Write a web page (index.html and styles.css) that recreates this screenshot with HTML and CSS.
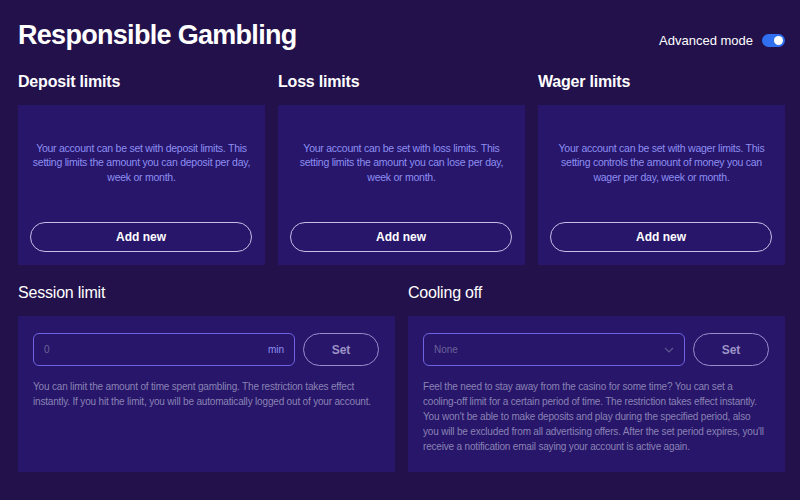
FILE: index.html
```html
<!DOCTYPE html>
<html lang="en">

<head>
    <meta charset="UTF-8">
    <meta name="viewport" content="width=device-width, initial-scale=1.0">
    <title>Responsible Gambling</title>
    <link rel="stylesheet" href="styles.css">
</head>

<body>
    <div class="page">
        <div class="header">
            <h1>Responsible Gambling</h1>
            <div class="mode">
                <span>Advanced mode</span>
                <span class="toggle"><span class="knob"></span></span>
            </div>
        </div>

        <div class="limits">
            <div class="col">
                <h3>Deposit limits</h3>
                <div class="card">
                    <p class="info">Your account can be set with deposit limits. This setting limits the amount you can deposit per day, week or month.</p>
                    <button class="add">Add new</button>
                </div>
            </div>
            <div class="col">
                <h3>Loss limits</h3>
                <div class="card">
                    <p class="info">Your account can be set with loss limits. This setting limits the amount you can lose per day, week or month.</p>
                    <button class="add">Add new</button>
                </div>
            </div>
            <div class="col">
                <h3>Wager limits</h3>
                <div class="card">
                    <p class="info">Your account can be set with wager limits. This setting controls the amount of money you can wager per day, week or month.</p>
                    <button class="add">Add new</button>
                </div>
            </div>
        </div>

        <div class="settings">
            <div class="col">
                <h3 class="light">Session limit</h3>
                <div class="panel">
                    <div class="row">
                        <div class="field">
                            <span class="value">0</span>
                            <span class="unit">min</span>
                        </div>
                        <button class="set">Set</button>
                    </div>
                    <p class="desc">You can limit the amount of time spent gambling. The restriction takes effect instantly. If you hit the limit, you will be automatically logged out of your account.</p>
                </div>
            </div>
            <div class="col">
                <h3 class="light">Cooling off</h3>
                <div class="panel">
                    <div class="row">
                        <div class="field">
                            <span class="value">None</span>
                            <svg class="chev" width="10" height="6" viewBox="0 0 10 6"><path d="M1 1l4 4 4-4" fill="none" stroke="#5f5690" stroke-width="1.2"/></svg>
                        </div>
                        <button class="set">Set</button>
                    </div>
                    <p class="desc">Feel the need to stay away from the casino for some time? You can set a cooling-off limit for a certain period of time. The restriction takes effect instantly. You won't be able to make deposits and play during the specified period, also you will be excluded from all advertising offers. After the set period expires, you'll receive a notification email saying your account is active again.</p>
                </div>
            </div>
        </div>
    </div>
</body>

</html>
```

FILE: styles.css
```css
body {
    margin: 0;
    background: #23114b;
    font-family: "Liberation Sans", Arial, sans-serif;
    color: #fff;
    overflow: hidden;
}

.page {
    padding: 18px 15px 0 18px;
}

.header {
    display: flex;
    justify-content: space-between;
    align-items: flex-start;
    height: 54px;
}

h1 {
    margin: 2px 0 0;
    font-size: 27px;
    font-weight: bold;
    letter-spacing: -0.7px;
}

.mode {
    display: flex;
    align-items: center;
    gap: 9px;
    margin-top: 15px;
    font-size: 13px;
}

.toggle {
    display: inline-block;
    width: 23px;
    height: 13px;
    border-radius: 7px;
    background: #2f6ff0;
    position: relative;
}

.knob {
    position: absolute;
    right: 2px;
    top: 2px;
    width: 9px;
    height: 9px;
    border-radius: 50%;
    background: #fff;
}

h3 {
    margin: 0 0 13px;
    font-size: 16px;
    font-weight: bold;
    line-height: 20px;
    letter-spacing: -0.2px;
}

h3.light {
    font-weight: normal;
}

.limits {
    display: grid;
    grid-template-columns: repeat(3, 1fr);
    gap: 13px;
}

.card {
    height: 160px;
    box-sizing: border-box;
    background: #27166a;
    padding: 12px 12px 13px 12px;
    display: flex;
    flex-direction: column;
}

.add {
    margin-right: 1px;
}

.info {
    flex: 1;
    margin: 0;
    display: flex;
    align-items: center;
    justify-content: center;
    text-align: center;
    padding: 0 0 14px;
    font-size: 10.5px;
    letter-spacing: -0.25px;
    line-height: 14.5px;
    color: #8e8ff2;
}

.add {
    height: 30px;
    border: 1px solid #c9bde6;
    border-radius: 15px;
    background: transparent;
    color: #fff;
    font-family: inherit;
    font-size: 12px;
    font-weight: bold;
}

.settings {
    display: grid;
    grid-template-columns: 1fr 1fr;
    gap: 13px;
    margin-top: 18px;
}

.panel {
    height: 156px;
    box-sizing: border-box;
    background: #27166a;
    padding: 17px 16px 0 15px;
}

.row {
    display: flex;
    gap: 8px;
}

.field {
    flex: 1;
    height: 33px;
    box-sizing: border-box;
    border: 1px solid #6f64e0;
    border-radius: 6px;
    display: flex;
    align-items: center;
    justify-content: space-between;
    padding: 0 10px 0 10px;
    font-size: 10px;
}

.value {
    color: #6d6399;
}

.unit {
    color: #8e8ff2;
}

.set {
    width: 76px;
    height: 33px;
    border: 1px solid #9c8ccc;
    border-radius: 17px;
    background: transparent;
    color: #9d93c6;
    font-family: inherit;
    font-size: 12px;
    font-weight: bold;
}

.desc {
    margin: 13px 0 0;
    padding-right: 4px;
    font-size: 10px;
    letter-spacing: -0.18px;
    line-height: 15px;
    color: #8a82b4;
}
```
